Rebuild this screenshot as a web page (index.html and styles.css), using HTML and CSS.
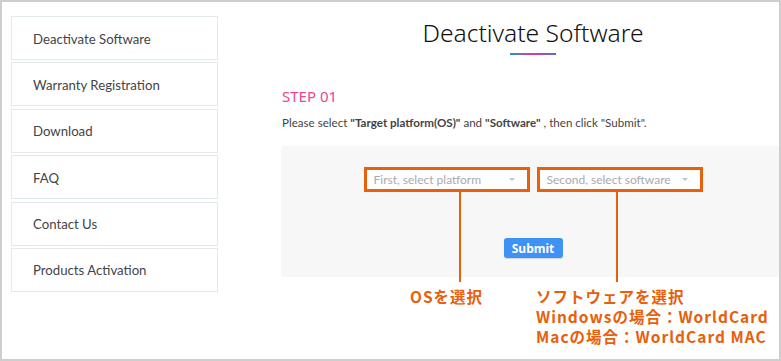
FILE: index.html
```html
<!DOCTYPE html>
<html lang="en">

<head>
    <meta charset="UTF-8">
    <meta name="viewport" content="width=device-width, initial-scale=1.0">
    <title>Deactivate Software</title>

    <link rel="stylesheet" href="styles.css">

</head>

<body>

    <div class="frame">

        <nav class="side">
            <a href="#" class="side-item">Deactivate Software</a>
            <a href="#" class="side-item">Warranty Registration</a>
            <a href="#" class="side-item">Download</a>
            <a href="#" class="side-item">FAQ</a>
            <a href="#" class="side-item">Contact Us</a>
            <a href="#" class="side-item">Products Activation</a>
        </nav>

        <section class="main">

            <div class="title">
                <h1>Deactivate Software</h1>
                <span class="bar"></span>
            </div>

            <h2 class="step">STEP 01</h2>
            <p class="info">Please select <b>"Target platform(OS)"</b> and <b>"Software"</b> , then click "Submit".</p>

            <div class="panel">
                <div class="selects">
                    <div class="sel">
                        <span>First, select platform</span>
                        <i class="caret"></i>
                    </div>
                    <div class="sel">
                        <span>Second, select software</span>
                        <i class="caret"></i>
                    </div>
                </div>
                <button class="submit">Submit</button>
            </div>

        </section>

        <div class="note">
            <span class="line line-os"></span>
            <span class="line line-sw"></span>
            <p class="label label-os">OSを選択</p>
            <div class="label label-sw">
                <p>ソフトウェアを選択</p>
                <p>Windowsの場合：WorldCard</p>
                <p>Macの場合：WorldCard MAC</p>
            </div>
        </div>

    </div>

</body>

</html>
```

FILE: styles.css
```css
body {
    margin: 0;
}

.frame {
    position: relative;
    width: 781px;
    height: 361px;
    box-sizing: border-box;
    border: 2px solid rgb(206, 206, 206);
    display: flex;
    overflow: hidden;
    background-color: #fff;
    font-family: Lato, "Noto Sans", sans-serif;
}

.side {
    width: 207px;
    flex-shrink: 0;
    margin: 14px 0 0 9px;
    display: flex;
    flex-direction: column;
    gap: 2.4px;
}

.side-item {
    height: 44px;
    box-sizing: border-box;
    border: 1px solid rgb(226, 234, 238);
    padding: 1px 0 0 21px;
    display: flex;
    align-items: center;
    font-size: 13.2px;
    color: rgb(68, 68, 72);
    text-decoration: none;
}

.main {
    width: 504px;
    flex-shrink: 0;
    margin-left: 63px;
    font-family: Lato, "Noto Sans", sans-serif;
    color: rgb(68, 68, 68);
}

.title {
    text-align: center;
    padding-top: 13px;
}

.title h1 {
    margin: 0;
    font-family: "Noto Sans", sans-serif;
    font-size: 24.6px;
    font-weight: 300;
    line-height: 36px;
    color: rgb(17, 17, 17);
}

.bar {
    display: block;
    width: 46px;
    height: 2px;
    margin: 2px auto 0;
    background: linear-gradient(to right, rgb(22, 150, 235), rgb(236, 52, 140) 50%, rgb(80, 110, 230));
}

.step {
    margin: 30px 0 0 1px;
    font-family: "Noto Sans", sans-serif;
    font-size: 15px;
    font-weight: 400;
    line-height: 22px;
    color: rgb(234, 70, 146);
}

.info {
    margin: 7px 0 0 1px;
    font-size: 11.6px;
    line-height: 18px;
}

.panel {
    margin-top: 14px;
    height: 131px;
    background-color: rgb(247, 247, 247);
    border-radius: 3px 0 0 3px;
    display: flex;
    flex-direction: column;
    align-items: center;
}

.selects {
    display: flex;
    gap: 7px;
    margin-top: 21px;
}

.sel {
    width: 166px;
    height: 25px;
    box-sizing: border-box;
    border: 3px solid rgb(232, 96, 10);
    background-color: #fff;
    display: flex;
    align-items: center;
    justify-content: space-between;
    padding: 0 12px 0 7px;
    font-size: 12px;
    color: rgb(170, 170, 170);
}

.caret {
    width: 0;
    height: 0;
    border-left: 3.5px solid transparent;
    border-right: 3.5px solid transparent;
    border-top: 3.5px solid rgb(184, 196, 210);
}

.submit {
    margin-top: 46px;
    width: 59px;
    height: 20px;
    border: none;
    border-radius: 3px;
    background-color: rgb(62, 145, 245);
    color: #fff;
    font-family: "Noto Sans", sans-serif;
    font-weight: 700;
    font-size: 12px;
    padding: 0;
    box-shadow: 0 1px 1px rgba(0, 0, 0, 0.15);
}

.note {
    position: absolute;
    left: -2px;
    top: -2px;
    width: 781px;
    height: 361px;
    pointer-events: none;
}

.line {
    position: absolute;
    top: 192px;
    width: 2px;
    height: 90px;
    background-color: rgb(232, 96, 10);
}

.line-os {
    left: 459px;
}

.line-sw {
    left: 616px;
}

.label {
    position: absolute;
    margin: 0;
    font-family: "Noto Sans CJK JP", sans-serif;
    font-weight: 700;
    font-size: 15.5px;
    line-height: 20px;
    letter-spacing: 1px;
    color: rgb(232, 96, 10);
}

.label p {
    margin: 0;
}

.label-os {
    left: 410px;
    top: 286px;
}

.label-sw {
    left: 536px;
    top: 286px;
}
```
